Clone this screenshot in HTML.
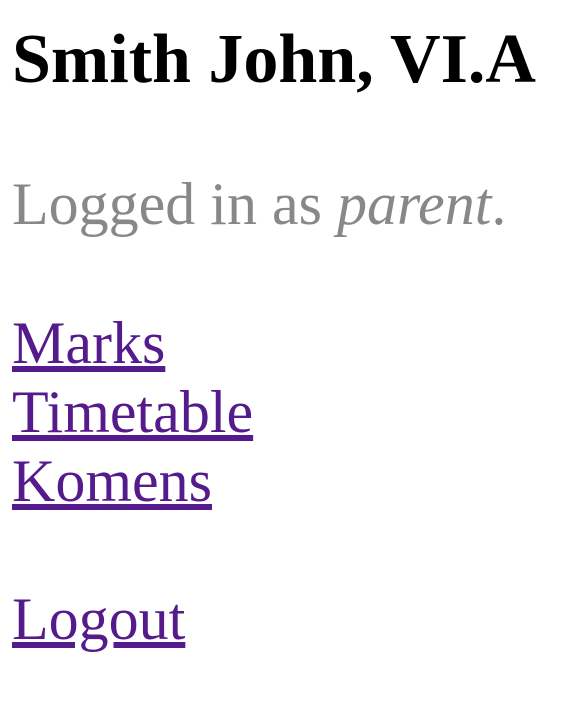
<!DOCTYPE html>
<html><head><style>
body{margin:0;background:#fff;font-family:"Liberation Serif",serif;}
div{position:absolute;left:12px;white-space:nowrap;}
.h{font-size:70px;font-weight:bold;line-height:80px;top:20px;color:#000;}
.t{font-size:60px;line-height:69px;}
.g{color:#888;}
a{color:#551a8b;text-decoration:underline;}
</style></head><body>
<div class="h">Smith John, VI.A</div>
<div class="t g" style="top:170px">Logged in as <i>parent</i>.</div>
<div class="t" style="top:309px"><a href="#">Marks</a></div>
<div class="t" style="top:378px"><a href="#">Timetable</a></div>
<div class="t" style="top:447px"><a href="#">Komens</a></div>
<div class="t" style="top:585px"><a href="#">Logout</a></div>
</body></html>
